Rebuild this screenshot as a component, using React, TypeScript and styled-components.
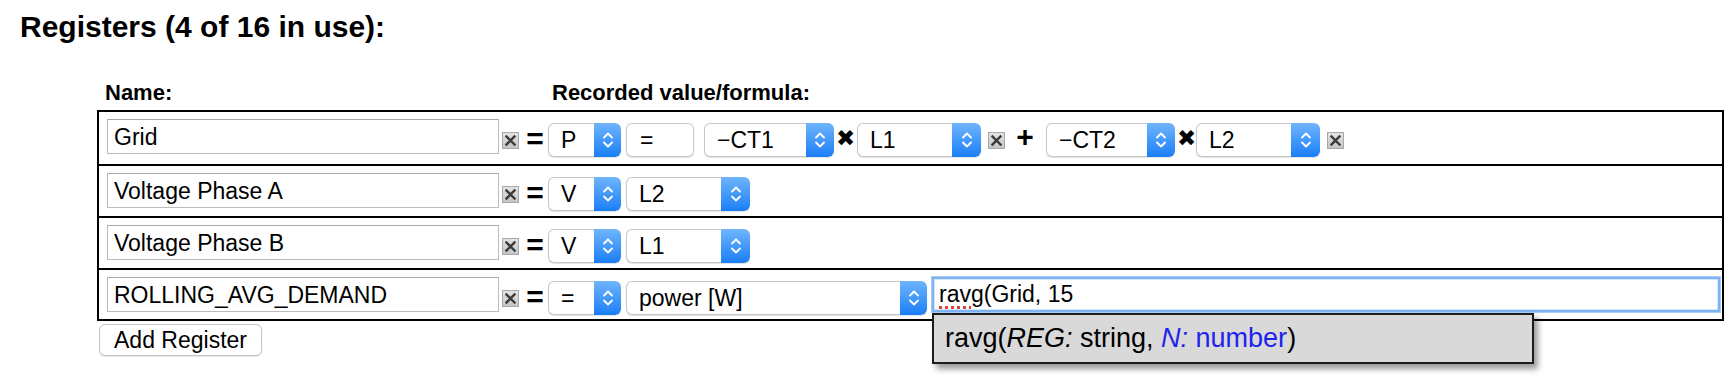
import React from "react";
import styled, { createGlobalStyle } from "styled-components";

const GlobalStyle = createGlobalStyle`
  html, body { margin: 0; padding: 0; background: #fff; }
  body {
    font-family: "Liberation Sans", Arial, Helvetica, sans-serif;
    color: #000;
  }
`;

const Page = styled.div`
  width: 1730px;
  min-height: 386px;
  box-sizing: border-box;
  padding-top: 9px;
`;

const Title = styled.h2`
  margin: 0 0 0 20px;
  font-size: 30px;
  line-height: 36px;
  font-weight: bold;
`;

const Section = styled.div`
  margin-left: 97px;
  width: 1627px;
`;

const HeaderRow = styled.div`
  display: flex;
  margin-top: 35px;
  margin-bottom: 4px;
  font-size: 22px;
  line-height: 26px;
  font-weight: bold;
`;

const HeaderCell = styled.div<{ $w?: number; $pad: number }>`
  padding-left: ${(p) => p.$pad}px;
  width: ${(p) => (p.$w ? `${p.$w}px` : "auto")};
  box-sizing: border-box;
`;

const Table = styled.div`
  border: 2px solid #000;
  border-top: none;
`;

const Row = styled.div<{ $h: number }>`
  box-sizing: border-box;
  height: ${(p) => p.$h}px;
  border-top: 2px solid #000;
  display: flex;
  align-items: flex-start;
  padding: 7px 2px 0 8px;
`;

const NameInput = styled.input`
  box-sizing: border-box;
  width: 392px;
  height: 35px;
  margin: 0;
  padding: 2px 6px 0;
  border: 1px solid #bcbcbc;
  border-top-color: #a9a9a9;
  border-radius: 0;
  background: #fff;
  font-family: inherit;
  font-size: 23px;
  color: #000;
  outline: none;
`;

const XBox = styled.span<{ $ml: number }>`
  display: block;
  width: 17px;
  height: 17px;
  margin-left: ${(p) => p.$ml}px;
  margin-top: 13px;
  line-height: 0;
`;

const Operator = styled.span<{ $ml: number; $w: number; $mt: number; $font?: string; $size: number }>`
  display: block;
  width: ${(p) => p.$w}px;
  margin-left: ${(p) => p.$ml}px;
  margin-top: ${(p) => p.$mt}px;
  font-family: ${(p) => p.$font || "inherit"};
  font-size: ${(p) => p.$size}px;
  line-height: 30px;
  height: 30px;
  font-weight: bold;
  text-align: center;
`;

const SelectBox = styled.div<{ $w: number; $ml: number }>`
  box-sizing: border-box;
  width: ${(p) => p.$w}px;
  height: 34px;
  margin-left: ${(p) => p.$ml}px;
  margin-top: 4px;
  display: flex;
  align-items: stretch;
  border-radius: 6px;
  overflow: hidden;
  background: #fff;
  box-shadow: inset 0 0 0 1px #c6c6c6, 0 1px 1px rgba(0, 0, 0, 0.12);
  font-size: 23px;
`;

const SelectText = styled.span<{ $pad: number }>`
  flex: 1;
  display: flex;
  align-items: center;
  padding-left: ${(p) => p.$pad}px;
  white-space: nowrap;
`;

const SelectArrow = styled.span<{ $w: number }>`
  width: ${(p) => p.$w}px;
  display: flex;
  align-items: center;
  justify-content: center;
  background: linear-gradient(#6fb5fc, #1a7ef6);
  border-radius: 0 6px 6px 0;
`;

const FormulaWrap = styled.div`
  position: relative;
  flex: 1;
  margin-left: 5px;
`;

const FormulaField = styled.div`
  box-sizing: border-box;
  height: 35px;
  display: flex;
  align-items: center;
  padding-left: 5px;
  border: 2px solid #7db3f3;
  box-shadow: 0 0 0 1px #a9cbf5, inset 0 0 0 1px #d5e6fb;
  background: #fff;
  font-size: 23px;
  white-space: nowrap;
`;

const Misspelled = styled.span`
  text-decoration-line: underline;
  text-decoration-style: dotted;
  text-decoration-color: #e0403a;
  text-decoration-thickness: 3px;
  text-underline-offset: 4px;
`;

const Tooltip = styled.div`
  position: absolute;
  left: 0;
  top: calc(100% + 1px);
  box-sizing: border-box;
  width: 602px;
  height: 51px;
  display: flex;
  align-items: center;
  padding-left: 11px;
  background: #d9d9d9;
  border: 2px solid #1c1c1c;
  box-shadow: 4px 5px 6px rgba(0, 0, 0, 0.4);
  font-size: 27px;
  white-space: nowrap;
  z-index: 2;
`;

const Param = styled.span<{ $blue?: boolean }>`
  font-style: italic;
  color: ${(p) => (p.$blue ? "#2222ee" : "#000")};
`;

const TypeName = styled.span<{ $blue?: boolean }>`
  color: ${(p) => (p.$blue ? "#2222ee" : "#000")};
`;

const AddButton = styled.button`
  display: block;
  box-sizing: border-box;
  margin: 3px 0 0 2px;
  width: 163px;
  height: 32px;
  padding: 0;
  border: 1px solid #c4c4c4;
  border-radius: 6px;
  background: #fff;
  box-shadow: 0 1px 1px rgba(0, 0, 0, 0.1);
  font-family: inherit;
  font-size: 23px;
  color: #000;
`;

const Chevrons = () => (
  <svg width="12" height="20" viewBox="0 0 12 20">
    <polyline points="2,7.5 6,3.5 10,7.5" fill="none" stroke="#fff" strokeWidth="1.8" strokeLinecap="round" strokeLinejoin="round" />
    <polyline points="2,12.5 6,16.5 10,12.5" fill="none" stroke="#fff" strokeWidth="1.8" strokeLinecap="round" strokeLinejoin="round" />
  </svg>
);

const DeleteBox = ({ ml }: { ml: number }) => (
  <XBox $ml={ml}>
    <svg width="17" height="17" viewBox="0 0 17 17">
      <defs>
        <linearGradient id="xg" x1="0" y1="0" x2="0" y2="1">
          <stop offset="0" stopColor="#e4e4e4" />
          <stop offset="1" stopColor="#c4c4c4" />
        </linearGradient>
      </defs>
      <rect x="0.5" y="0.5" width="16" height="16" fill="url(#xg)" stroke="#a8a8a8" />
      <path d="M4.5 4.5 L12.5 12.5 M12.5 4.5 L4.5 12.5" stroke="#3a3a3a" strokeWidth="2.4" strokeLinecap="square" />
    </svg>
  </XBox>
);

const Select = ({ w, ml, label, arrow = 27, pad = 13 }: { w: number; ml: number; label: string; arrow?: number; pad?: number }) => (
  <SelectBox $w={w} $ml={ml}>
    <SelectText $pad={pad}>{label}</SelectText>
    {arrow > 0 && (
      <SelectArrow $w={arrow}>
        <Chevrons />
      </SelectArrow>
    )}
  </SelectBox>
);

const Equals = () => (
  <Operator $ml={7} $w={18} $mt={5} $size={30}>=</Operator>
);

const Times = ({ ml }: { ml: number }) => (
  <Operator $ml={ml} $w={17} $mt={4} $size={23} $font={'"DejaVu Sans", sans-serif'}>✖</Operator>
);

export default function App() {
  return (
    <>
      <GlobalStyle />
      <Page>
        <Title>Registers (4 of 16 in use):</Title>
        <Section>
          <HeaderRow>
            <HeaderCell $w={455} $pad={8}>Name:</HeaderCell>
            <HeaderCell $pad={0}>Recorded value/formula:</HeaderCell>
          </HeaderRow>
          <Table>
            <Row $h={54}>
              <NameInput readOnly value="Grid" />
              <DeleteBox ml={3} />
              <Equals />
              <Select w={73} ml={4} label="P" />
              <Select w={68} ml={5} label="=" arrow={0} pad={14} />
              <Select w={130} ml={10} label="−CT1" arrow={28} />
              <Times ml={2} />
              <Select w={124} ml={4} label="L1" arrow={29} />
              <DeleteBox ml={7} />
              <Operator $ml={11} $w={18} $mt={3} $size={30}>+</Operator>
              <Select w={129} ml={12} label="−CT2" arrow={28} />
              <Times ml={2} />
              <Select w={124} ml={2} label="L2" arrow={29} />
              <DeleteBox ml={7} />
            </Row>
            <Row $h={52}>
              <NameInput readOnly value="Voltage Phase A" />
              <DeleteBox ml={3} />
              <Equals />
              <Select w={73} ml={4} label="V" />
              <Select w={124} ml={5} label="L2" arrow={29} />
            </Row>
            <Row $h={52}>
              <NameInput readOnly value="Voltage Phase B" />
              <DeleteBox ml={3} />
              <Equals />
              <Select w={73} ml={4} label="V" />
              <Select w={124} ml={5} label="L1" arrow={29} />
            </Row>
            <Row $h={51}>
              <NameInput readOnly value="ROLLING_AVG_DEMAND" />
              <DeleteBox ml={3} />
              <Equals />
              <Select w={73} ml={4} label="=" />
              <Select w={301} ml={5} label="power [W]" arrow={27} />
              <FormulaWrap>
                <FormulaField>
                  <Misspelled>ravg</Misspelled>(Grid, 15
                </FormulaField>
                <Tooltip>
                  ravg(<Param>REG:</Param>
                  <TypeName>&nbsp;string,&nbsp;</TypeName>
                  <Param $blue>N:</Param>
                  <TypeName $blue>&nbsp;number</TypeName>)
                </Tooltip>
              </FormulaWrap>
            </Row>
          </Table>
          <AddButton type="button">Add Register</AddButton>
        </Section>
      </Page>
    </>
  );
}
